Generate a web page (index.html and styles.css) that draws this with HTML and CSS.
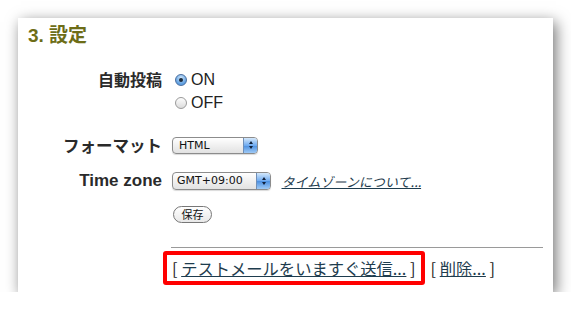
FILE: index.html
```html
<!DOCTYPE html>
<html lang="ja">
<head>
	<meta charset="UTF-8">
	<title>設定</title>
	<link rel="stylesheet" href="styles.css">
</head>
<body>
	<div class="panel">
		<h2 class="title">3. 設定</h2>
		<div class="form">
			<div class="label label-small">自動投稿</div>
			<div class="radios">
				<label class="radio"><span class="dot on"></span>ON</label>
				<label class="radio"><span class="dot"></span>OFF</label>
			</div>

			<div class="label row-fmt">フォーマット</div>
			<div class="row-fmt">
				<span class="select sel-fmt"><span class="val">HTML</span><span class="stepper"><i class="up"></i><i class="down"></i></span></span>
			</div>

			<div class="label latin row-tz">Time zone</div>
			<div class="row-tz tz">
				<span class="select sel-tz"><span class="val">GMT+09:00</span><span class="stepper"><i class="up"></i><i class="down"></i></span></span>
				<a class="about" href="#">タイムゾーンについて...</a>
			</div>

			<div></div>
			<div class="row-save"><span class="btn">保存</span></div>
		</div>
		<div class="actions">
			<span class="hilite">[ <a href="#">テストメールをいますぐ送信...</a> ]</span>
			<span class="del">[ <a href="#">削除...</a> ]</span>
		</div>
	</div>
</body>
</html>
```

FILE: styles.css
```css
*{margin:0;padding:0;box-sizing:border-box}
body{
	background:#fff;
	font-family:"Liberation Sans","Noto Sans CJK JP",sans-serif;
	color:#222;
}
.panel{
	width:535px;
	height:274px;
	margin:18px 0 0 18px;
	background:#fff;
	box-shadow:3px 4px 14px rgba(0,0,0,.55);
	padding:0 10px 0 10px;
	overflow:hidden;
}
.title{
	font-family:"Liberation Sans","Noto Sans CJK JP",sans-serif;
	font-size:19px;
	font-weight:bold;
	color:#6d6d17;
	line-height:24px;
	margin-top:6px;
}
.form{
	display:grid;
	grid-template-columns:134px 1fr;
	column-gap:10px;
	margin-top:20px;
	align-items:center;
}
.label{
	text-align:right;
	font-weight:bold;
	font-size:16.5px;
	color:#2a2a2a;
	font-family:"Noto Sans CJK JP",sans-serif;
}
.label.latin{
	font-family:"Liberation Sans",sans-serif;
	font-size:17px;
}
.label-small{
	font-size:16px;
	align-self:start;
	line-height:23px;
}
.radios{
	padding-left:3px;
}
.radio{
	display:flex;
	align-items:center;
	height:23px;
	font-size:16px;
	font-family:"Liberation Sans",sans-serif;
	color:#222;
}
.dot{
	width:12px;
	height:12px;
	border-radius:50%;
	border:1px solid #9a9a9a;
	background:linear-gradient(#fdfdfd,#dcdcdc);
	margin-right:4px;
	position:relative;
}
.dot.on{
	border-color:#4a6fa0;
	background:radial-gradient(circle at 50% 30%,#cfe6fb,#5d9ee0 70%);
}
.dot.on::after{
	content:"";
	position:absolute;
	left:3px;
	top:3px;
	width:4px;
	height:4px;
	border-radius:50%;
	background:#1b2a3a;
}
.row-fmt{
	margin-top:21px;
	height:20px;
	display:flex;
	align-items:center;
}
.label.row-fmt{
	justify-content:flex-end;
}
.row-tz{
	margin-top:16px;
	height:20px;
	display:flex;
	align-items:center;
}
.label.row-tz{
	justify-content:flex-end;
}
.select{
	display:inline-flex;
	align-items:stretch;
	height:17px;
	border:1px solid #8c8c8c;
	border-radius:4px;
	background:linear-gradient(#ffffff,#f0f0f0 50%,#e2e2e2);
	font-size:11px;
	font-family:"DejaVu Sans",sans-serif;
	color:#111;
	overflow:hidden;
	box-shadow:0 1px 1px rgba(0,0,0,.15);
}
.select .val{
	flex:1;
	padding-left:6px;
	line-height:15px;
}
.sel-fmt{width:86px}
.sel-tz{width:99px;height:18px}
.sel-tz .val{padding-left:4px;line-height:16px}
.stepper{
	width:14px;
	border-left:1px solid #6f8fb8;
	background:linear-gradient(#d4e8fb,#6eaaf0 50%,#4b8fe0 51%,#9fcaf6);
	display:flex;
	flex-direction:column;
	align-items:center;
	justify-content:center;
	gap:2px;
}
.stepper i{
	width:0;
	height:0;
	border-left:2.5px solid transparent;
	border-right:2.5px solid transparent;
}
.stepper .up{border-bottom:3px solid #10203a}
.stepper .down{border-top:3px solid #10203a}
.tz .about{
	margin-left:12px;
	font-family:"Noto Sans CJK JP",sans-serif;
	font-size:13px;
	color:#1e3c4e;
	transform:skewX(-12deg);
	display:inline-block;
}
.row-save{
	margin-top:14px;
	padding-left:1px;
}
.btn{
	display:inline-block;
	width:39px;
	height:17px;
	border:1px solid #777;
	border-radius:9px;
	background:linear-gradient(#ffffff,#e8e8e8);
	font-family:"Noto Sans CJK JP",sans-serif;
	font-size:11px;
	line-height:15px;
	text-align:center;
	color:#111;
}
.actions{
	margin:24px 0 0 143px;
	border-top:1px solid #9a9a9a;
	width:372px;
	padding-top:3px;
	display:flex;
	align-items:center;
	font-family:"Noto Sans CJK JP",sans-serif;
	font-size:16.3px;
	color:#222;
}
.actions a{
	color:#1e3c4e;
	text-decoration:underline;
}
.hilite{
	margin-left:-8px;
	border:4px solid #f00;
	border-radius:3px;
	padding:0 5px 0 5px;
	height:34px;
	display:inline-flex;
	align-items:center;
	white-space:pre;
}
.del{
	margin-left:6px;
	white-space:pre;
}
```
